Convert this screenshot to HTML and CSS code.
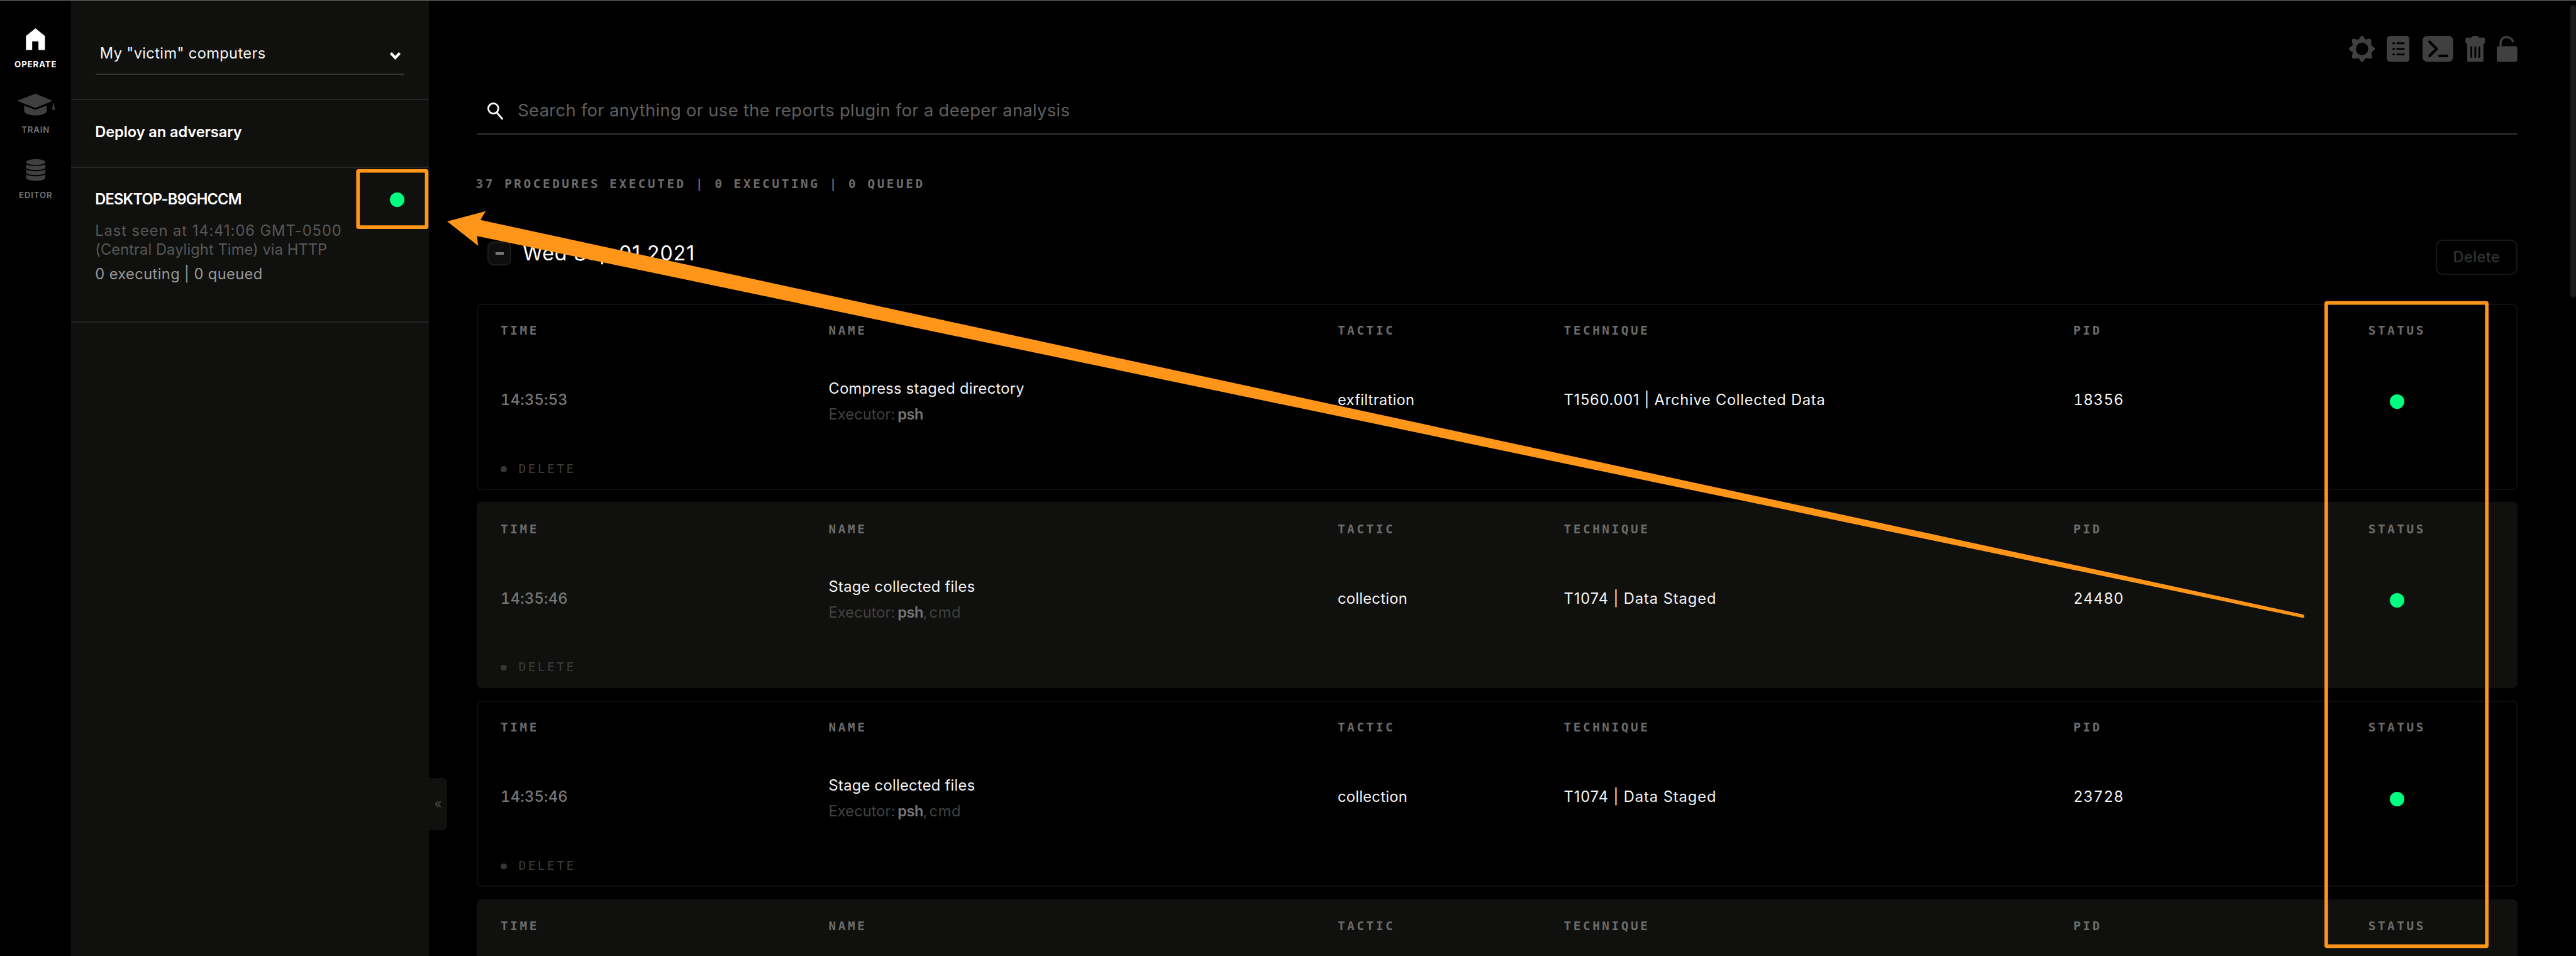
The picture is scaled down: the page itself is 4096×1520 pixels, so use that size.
FILE: index.html
```html
<!DOCTYPE html>
<html lang="en">
<head>
<meta charset="utf-8">
<title>Operate</title>
<link rel="stylesheet" href="styles.css">
</head>
<body>
<div class="app">
  <nav class="rail">
    <a class="rail-item active">
      <svg class="rail-icon" viewBox="0 0 96 37"><path d="M48 0 64 13V36.500H53V22H42.500V36.500H32V13Z"/></svg>
      <span class="rail-label operate">OPERATE</span>
    </a>
    <a class="rail-item">
      <svg class="rail-icon" viewBox="0 0 96 37"><path d="M48 0 77 12 48 24 17 12Z"/><path d="M29 20 48 27 67 20V29C67 33 58 36.500 48 36.500S29 33 29 29Z"/><path d="M78 14 81 27H76Z"/></svg>
      <span class="rail-label">TRAIN</span>
    </a>
    <a class="rail-item">
      <svg class="rail-icon" viewBox="0 0 96 37"><ellipse cx="48.500" cy="5" rx="16.200" ry="5"/><path d="M32.300 8.500C36 12.500 61 12.500 64.700 8.500V14.500C62 19.500 35 19.500 32.300 14.500Z"/><path d="M32.300 17C36 21.500 61 21.500 64.700 17V23C62 28 35 28 32.300 23Z"/><path d="M32.300 25.500C36 30 61 30 64.700 25.500V32C62 38 35 38 32.300 32Z"/></svg>
      <span class="rail-label">EDITOR</span>
    </a>
  </nav>

  <aside class="sidebar">
    <div class="group-picker">
      <div class="select">
        <span class="select-value">My "victim" computers</span>
        <svg class="chevron" viewBox="0 0 20 14"><path d="M2.500 2.500 10 10.500 17.500 2.500"/></svg>
      </div>
    </div>
    <div class="deploy">Deploy an adversary</div>
    <div class="agent">
      <div class="agent-head"><span class="agent-name">DESKTOP-B9GHCCM</span><i class="dot"></i></div>
      <p class="agent-seen"><span class="seen-time">Last seen at 14:41:06 GMT-0500</span><br>(Central Daylight Time) via HTTP</p>
      <p class="agent-jobs">0 executing | 0 queued</p>
    </div>
    <button class="collapse-tab">«</button>
  </aside>

  <main class="main">
    <div class="toolbar">
      <svg class="tool gear" viewBox="0 0 44 44"><path fill-rule="evenodd" d="M22 0C25 0 26 5 28 6S34 3.500 36.500 5.500 37 13 38 16 44 19 44 22 39 26 38 28 40.500 35 38.500 37.500 30 37 28 38 25 44 22 44 18 39 16 38 8.500 40 6 38 6.500 30 6 28 0 25 0 22 5 18 6 16 3.500 8 5.500 5.500 14 7 16 6 19 0 22 0ZM22 11.500A10.500 10.500 0 1 0 22 32.500 10.500 10.500 0 1 0 22 11.500Z"/></svg>
      <svg class="tool list" viewBox="0 0 39 44"><rect width="39" height="44" rx="6"/><path class="cut" d="M11 12.500h1.500M18 12.500h11M11 22h1.500M18 22h11M11 31.500h1.500M18 31.500h11"/></svg>
      <svg class="tool term" viewBox="0 0 52 44"><rect width="52" height="44" rx="8"/><path class="cut thick" d="M12 10 24 22 12 34M29 34H41.500"/></svg>
      <svg class="tool trash" viewBox="0 0 33 44"><path d="M10 3C11 1 12 0 13.500 0H19.500C21 0 22 1 23 3H31Q33 3 33 5.500V11Q33 13.500 30.500 13.500V42Q30.500 44 28.500 44H5Q3 44 3 42V13.500Q0 13.500 0 11V5.500Q0 3 2 3Z"/><path class="cut" d="M10 19V36M16.700 19V36M23.400 19V36"/></svg>
      <svg class="tool lock" viewBox="0 0 35 44"><rect y="17.500" width="35" height="26.500" rx="3.500"/><path class="shackle" d="M6.500 20V13C6.500-1 24-1 27.500 9"/></svg>
    </div>

    <div class="search">
      <svg class="search-icon" viewBox="0 0 27 29"><circle cx="10" cy="10" r="8.500"/><path d="M15.500 16.500 25 27.500"/></svg>
      <span>Search for anything or use the reports plugin for a deeper analysis</span>
    </div>

    <div class="stats">37 PROCEDURES EXECUTED | 0 EXECUTING | 0 QUEUED</div>

    <div class="day">
      <div class="day-title"><button class="fold"><i></i></button><h2>Wed Sep 01 2021</h2></div>
      <button class="delete-all">Delete</button>
    </div>

    <div class="rows">
      <section class="row">
        <div class="cells head"><span>TIME</span><span>NAME</span><span>TACTIC</span><span>TECHNIQUE</span><span>PID</span><span class="status">STATUS</span></div>
        <div class="cells data">
          <span class="time">14:35:53</span>
          <div class="name"><span>Compress staged directory</span><span class="exec">Executor:<b>psh</b></span></div>
          <span>exfiltration</span><span class="tech">T1560.001 | Archive Collected Data</span><span class="pid">18356</span><span class="status"><i class="dot"></i></span>
        </div>
        <div class="row-delete"><i></i>DELETE</div>
      </section>
      <section class="row alt">
        <div class="cells head"><span>TIME</span><span>NAME</span><span>TACTIC</span><span>TECHNIQUE</span><span>PID</span><span class="status">STATUS</span></div>
        <div class="cells data">
          <span class="time">14:35:46</span>
          <div class="name"><span>Stage collected files</span><span class="exec">Executor:<b>psh</b>,<em>cmd</em></span></div>
          <span>collection</span><span class="tech short">T1074 | Data Staged</span><span class="pid">24480</span><span class="status"><i class="dot"></i></span>
        </div>
        <div class="row-delete"><i></i>DELETE</div>
      </section>
      <section class="row">
        <div class="cells head"><span>TIME</span><span>NAME</span><span>TACTIC</span><span>TECHNIQUE</span><span>PID</span><span class="status">STATUS</span></div>
        <div class="cells data">
          <span class="time">14:35:46</span>
          <div class="name"><span>Stage collected files</span><span class="exec">Executor:<b>psh</b>,<em>cmd</em></span></div>
          <span>collection</span><span class="tech short">T1074 | Data Staged</span><span class="pid">23728</span><span class="status"><i class="dot"></i></span>
        </div>
        <div class="row-delete"><i></i>DELETE</div>
      </section>
      <section class="row alt">
        <div class="cells head"><span>TIME</span><span>NAME</span><span>TACTIC</span><span>TECHNIQUE</span><span>PID</span><span class="status">STATUS</span></div>
      </section>
    </div>
  </main>
</div>
<div class="window-edge"></div>
<div class="scroll-thumb"></div>
<svg class="annotations" viewBox="0 0 4332 1608" preserveAspectRatio="none">
  <rect x="602" y="287.500" width="115.500" height="94.500" rx="1"/>
  <rect x="3912" y="509.500" width="270" height="1082" rx="1"/>
  <path d="M752 372.300 816.700 355.300 808 370 3873 1033.500Q3876.500 1035 3874.500 1038.500L3872 1039 802.300 397 804 413.300Z"/>
</svg>
</body>
</html>
```

FILE: styles.css
```css
/* 1rem is ten design pixels on a 4332px wide canvas */
html { font-size: calc(100vw / 433.2); }
* { box-sizing: border-box; }
body {
  margin: 0;
  background: #000;
  color: #f4f4f4;
  font: 400 2.5rem/3.2rem Inter, "Liberation Sans", sans-serif;
  font-feature-settings: "calt" 0;
  overflow: hidden;
}
p, h2 { margin: 0; }
button { margin: 0; padding: 0; font: inherit; display: block; }
svg { display: block; fill: currentColor; }

.app { display: flex; height: 100vh; overflow: hidden; }

.rail { flex: none; width: 12rem; padding-top: 4.8rem; display: flex; flex-direction: column; gap: 4.93rem; }
.rail-item { display: flex; flex-direction: column; align-items: center; gap: 1.5rem; height: 6.07rem; color: #404040; }
.rail-icon { width: 9.6rem; height: 3.7rem; flex: none; }
.rail-label { font-size: 1.4rem; line-height: 1.6rem; font-weight: 600; letter-spacing: .095rem; color: #757575; }
.rail-item.active { color: #fff; }
.rail-label.operate { color: #fff; font-weight: 700; }

.sidebar { flex: none; position: relative; width: 60.1rem; background: #10100e; }
.group-picker { padding: 5.43rem 4.1rem 4.1rem; height: 16.83rem; border-bottom: 2px solid #262626; }
.select { display: flex; align-items: center; justify-content: space-between; height: 7.2rem; padding: .2rem .5rem 0 .7rem; border-bottom: 2px solid #333; letter-spacing: .038rem; }
.chevron { width: 2rem; height: 1.4rem; margin-top: .6rem; fill: none; stroke: #fff; stroke-width: 4.5; }
.deploy { height: 11.44rem; padding: 3.75rem 4.1rem 0 4rem; border-bottom: 2px solid #262626; color: #fff; font-weight: 600; letter-spacing: -.01rem; }
.agent { height: 25.97rem; padding: 3.62rem 4.1rem 0 4rem; border-bottom: 2px solid #262626; }
.agent-head { display: flex; align-items: center; justify-content: space-between; }
.agent-name { padding-top: .1rem; font-weight: 600; letter-spacing: -.085rem; color: #fff; }
.dot { display: block; width: 2.45rem; height: 2.45rem; border-radius: 50%; background: #00ff80; }
.agent-seen { margin: 2.05rem -3rem 0 0; line-height: 3.16rem; color: #585858; letter-spacing: .01rem; }
.seen-time { letter-spacing: .103rem; }
.agent-jobs { margin-top: 1rem; color: #9a9a9a; letter-spacing: .043rem; }
.collapse-tab { position: absolute; left: 100%; top: 130.8rem; width: 3.1rem; height: 8.8rem; border: 0; border-radius: 0 .6rem .6rem 0; background: #10100e; color: #4a4a4a; font-size: 2.2rem; }

.main { flex: 1; padding: 6.07rem 9.83rem 0 8.02rem; min-width: 0; }
.toolbar { display: flex; justify-content: flex-end; height: 4.37rem; color: #404040; }
.tool { height: 4.37rem; }
.gear { width: 4.4rem; margin-right: 1.97rem; }
.list { width: 3.88rem; margin-right: 2.15rem; }
.term { width: 5.15rem; margin-right: 2.02rem; }
.trash { width: 3.33rem; margin-right: 2.05rem; }
.lock { width: 3.45rem; }
.cut { fill: none; stroke: #000; stroke-width: 3; stroke-linecap: round; }
.cut.thick { stroke-width: 4.6; stroke-linejoin: round; }
.shackle { fill: none; stroke: #404040; stroke-width: 3.6; stroke-linecap: round; }

.search { display: flex; align-items: center; height: 8rem; margin-top: 4.19rem; padding-left: 1.85rem; border-bottom: 2px solid #333; color: #5f5f5f; font-size: 2.9rem; letter-spacing: .031rem; }
.search-icon { width: 2.7rem; height: 2.9rem; margin: .3rem 2.4rem 0 0; fill: none; stroke: #fff; stroke-width: 3; stroke-linecap: round; }

.stats, .head, .row-delete { font: 700 2.05rem/2.4rem "DejaVu Sans Mono", monospace; letter-spacing: .373rem; color: #6c6c6c; white-space: pre; }
.stats { margin: 7.2rem 0 0 -.1rem; }

.day { display: flex; justify-content: space-between; align-items: flex-start; margin-top: 8.02rem; }
.day-title { display: flex; align-items: center; height: 4.7rem; padding-left: 1.9rem; gap: 1.9rem; }
.day-title h2 { font-size: 3.4rem; font-weight: 400; letter-spacing: .095rem; color: #fff; }
.fold { display: grid; place-items: center; width: 4rem; height: 4rem; border: 2px solid #1c1c1c; border-radius: 1rem; background: #0e0e0e; }
.fold i { width: 1.4rem; height: .4rem; background: #777; }
.delete-all { width: 13.8rem; height: 6rem; border: 2px solid #181818; border-radius: 1.2rem; background: none; color: #333; font-weight: 500; letter-spacing: .039rem; }

.rows { display: flex; flex-direction: column; gap: 2.1rem; margin-top: 4.8rem; }
.row { height: 31.3rem; padding: 3.19rem 3.97rem 0 3.87rem; border: 2px solid #0f0f0f; border-radius: .8rem; }
.row.alt { background: #10100e; border-color: #10100e; }
.cells { display: grid; grid-template-columns: 55.15rem 85.6rem 38.04rem 85.68rem 38.03rem 1fr; white-space: nowrap; }
.data { height: 20.84rem; align-items: center; letter-spacing: .033rem; }
.status { display: flex; justify-content: center; }
.head .status { padding-left: .3rem; }
.data .status { padding: .54rem 0 0 .3rem; }
.time { color: #787878; font-weight: 500; font-variant-numeric: tabular-nums; letter-spacing: .03rem; }
.name { padding-top: .36rem; display: flex; flex-direction: column; line-height: 4.34rem; }
.exec { color: #424242; letter-spacing: .008rem; }
.exec b { margin-left: .4rem; font-weight: 600; color: #777; letter-spacing: -.055rem; }
.exec em { margin-left: .3rem; font-style: normal; letter-spacing: .07rem; }
.tech { letter-spacing: .08rem; }
.tech.short { letter-spacing: .1rem; }
.pid { font-variant-numeric: tabular-nums; letter-spacing: .08rem; }
.row-delete { display: flex; align-items: center; color: #3c3c3c; font-weight: 400; }
.row-delete i { width: 1rem; height: 1rem; margin-right: 2rem; border-radius: 50%; background: #363636; }

.window-edge { position: absolute; inset: 0 0 auto; height: 1px; background: #666; }
.scroll-thumb { position: absolute; right: 0; top: .8rem; width: 1rem; height: 49.2rem; border-radius: .5rem; background: #1b1b1b; }
.annotations { position: absolute; left: 0; top: 0; width: 100vw; height: 100vh; fill: #ff9519; }
.annotations rect { fill: none; stroke: #ff9519; stroke-width: 6; }
```
